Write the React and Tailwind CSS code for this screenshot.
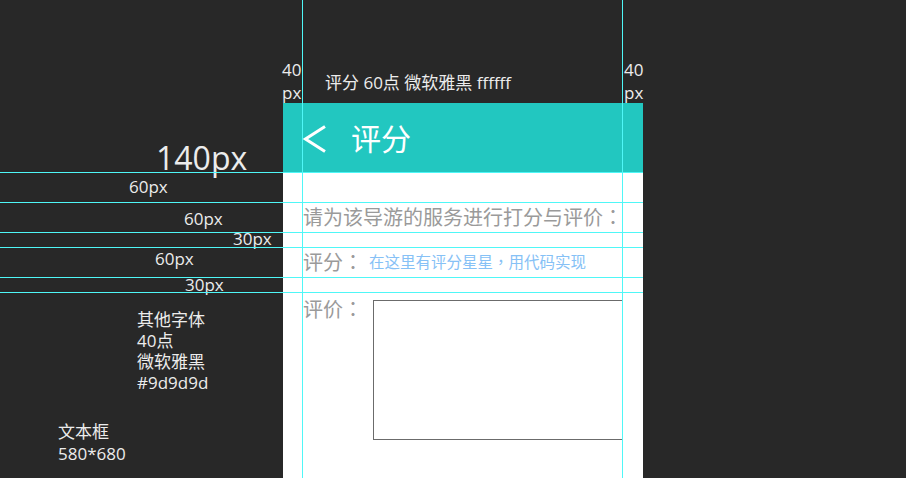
import React from 'react'

// guide lines drawn over the mockup (design annotation canvas)
const H_GUIDES = [172, 202, 232, 247, 277, 292]
const V_GUIDES = [302, 622]

// spacing notes on the left, placed where the designer dropped them
const NOTES = [
  { text: '140px', cls: 'left-[156px] top-[138px] text-[32px]' },
  { text: '60px', cls: 'left-[129px] top-[176px] text-[17px]' },
  { text: '60px', cls: 'left-[184px] top-[208px] text-[17px]' },
  { text: '30px', cls: 'left-[233px] top-[228px] text-[17px]' },
  { text: '60px', cls: 'left-[155px] top-[248px] text-[17px]' },
  { text: '30px', cls: 'left-[185px] top-[274px] text-[17px]' },
]

const Punct = ({ children }) => (
  <span className="font-['Noto_Sans_CJK_TC',sans-serif]">{children}</span>
)

export default function App() {
  return (
    <div className="relative w-[906px] h-[478px] overflow-hidden bg-[#282828] font-['Open_Sans','Noto_Sans_CJK_SC',sans-serif] text-[#ececec]">
      {/* Phone mockup */}
      <div className="pl-[283px] pt-[103px]">
        <div className="w-[360px] h-[375px] bg-white flex flex-col">
          <div className="h-[69px] bg-[#22c7c0] flex items-center pl-[20px] pt-[3px] shrink-0">
            <svg width="24" height="28" viewBox="0 0 24 28" fill="none">
              <polyline points="22,1.5 2.5,14 22,26.5" stroke="white" strokeWidth="3" strokeLinejoin="miter" />
            </svg>
            <span className="ml-[24px] text-[30px] leading-none text-white">评分</span>
          </div>

          <div className="pl-[20px] pt-[30px] text-[#9a9a9a]">
            <p className="h-[30px] text-[20px] leading-[30px]">请为该导游的服务进行打分与评价<Punct>：</Punct></p>

            <div className="mt-[15px] h-[30px] flex items-center">
              <span className="text-[20px] leading-[30px]">评分<Punct>：</Punct></span>
              <span className="ml-[6px] text-[15.5px] text-[#86c1f6]">在这里有评分星星<Punct>，</Punct>用代码实现</span>
            </div>

            <div className="mt-[15px] pt-[2px] flex">
              <span className="w-[70px] text-[20px] leading-[30px]">评价<Punct>：</Punct></span>
              <textarea
                className="mt-[6px] w-[250px] h-[140px] border border-[#6b6b6b] resize-none outline-none"
                defaultValue=""
              />
            </div>
          </div>
        </div>
      </div>

      {/* Header annotations */}
      <div className="absolute left-[325px] top-[72px] text-[17px] leading-[22px]">评分 60点 微软雅黑 ffffff</div>
      <div className="absolute left-[282px] top-[58px] text-[17px] leading-[23px]">40<br />px</div>
      <div className="absolute left-[624px] top-[58px] text-[17px] leading-[23px]">40<br />px</div>

      {NOTES.map((n, i) => (
        <div key={i} className={`absolute leading-tight ${n.cls}`}>{n.text}</div>
      ))}

      <div className="absolute left-[137px] top-[309px] text-[17px] leading-[21px]">
        <p>其他字体</p>
        <p>40点</p>
        <p>微软雅黑</p>
        <p>#9d9d9d</p>
      </div>
      <div className="absolute left-[58px] top-[421px] text-[17px] leading-[22px]">
        <p>文本框</p>
        <p>580*680</p>
      </div>

      {/* Guides */}
      {H_GUIDES.map(y => (
        <div key={y} className="absolute left-0 w-[643px] h-px bg-[#4ff7f7]" style={{ top: y }} />
      ))}
      {V_GUIDES.map(x => (
        <div key={x} className="absolute top-0 h-full w-px bg-[#4ff7f7]" style={{ left: x }} />
      ))}
    </div>
  )
}
